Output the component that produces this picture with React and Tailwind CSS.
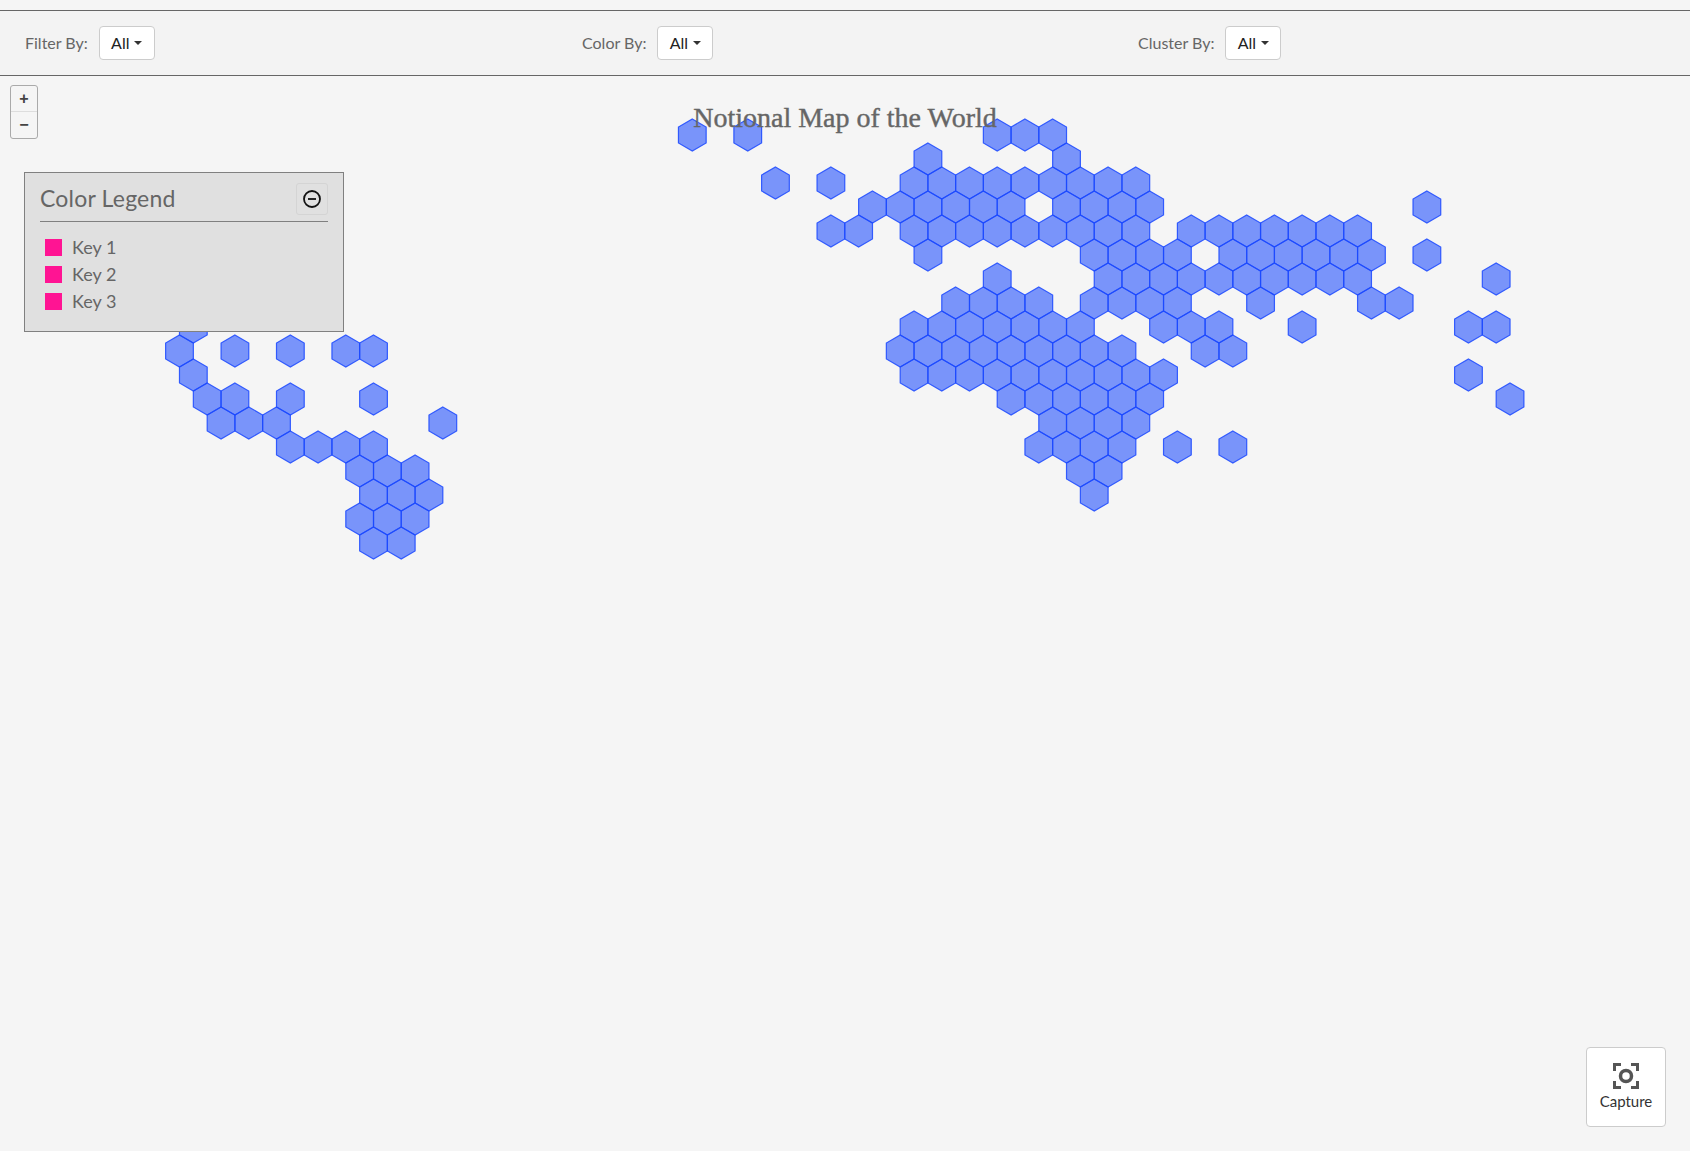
import React from 'react';

// hex bins: [row, columns...] on a pointy-top grid
const HEX_ROWS = [
  [0, 0, 4, 22, 24, 26],
  [1, 17, 27],
  [2, 6, 10, 16, 18, 20, 22, 24, 26, 28, 30, 32],
  [3, 13, 15, 17, 19, 21, 23, 27, 29, 31, 33, 53],
  [4, 10, 12, 16, 18, 20, 22, 24, 26, 28, 30, 32, 36, 38, 40, 42, 44, 46, 48],
  [5, 17, 29, 31, 33, 35, 39, 41, 43, 45, 47, 49, 53],
  [6, 22, 30, 32, 34, 36, 38, 40, 42, 44, 46, 48, 58],
  [7, 19, 21, 23, 25, 29, 31, 33, 35, 41, 49, 51],
  [8, -36, 16, 18, 20, 22, 24, 26, 28, 34, 36, 38, 44, 56, 58],
  [9, -37, -33, -29, -25, -23, 15, 17, 19, 21, 23, 25, 27, 29, 31, 37, 39],
  [10, -36, 16, 18, 20, 22, 24, 26, 28, 30, 32, 34, 56],
  [11, -35, -33, -29, -23, 23, 25, 27, 29, 31, 33, 59],
  [12, -34, -32, -30, -18, 26, 28, 30, 32],
  [13, -29, -27, -25, -23, 25, 27, 29, 31, 35, 39],
  [14, -24, -22, -20, 28, 30],
  [15, -23, -21, -19, 29],
  [16, -24, -22, -20],
  [17, -23, -21],
];

const HEX_PATH = 'M0,-16L13.86,-8L13.86,8L0,16L-13.86,8L-13.86,-8Z';

const hexes = HEX_ROWS.flatMap(([row, ...cols]) =>
  cols.map((col) => ({ key: `${row}_${col}`, x: 692.3 + col * 13.86, y: 135 + row * 24 }))
);

const FilterSelect = ({ label }) => (
  <div className="flex items-center gap-[11px]">
    <span className="text-[16px] text-[#666]">{label}</span>
    <button className="flex items-center gap-[5px] h-[34px] w-[56px] justify-center bg-white border border-[#ccc] rounded text-[16px] text-[#222]">
      All
      <span className="w-0 h-0 border-x-[4px] border-x-transparent border-t-[4px] border-t-[#333]"></span>
    </button>
  </div>
);

const App = () => {
  return (
    <div className="h-[1151px] flex flex-col bg-[#f5f5f5] overflow-hidden font-['Lato',sans-serif]">
      {/* Filters */}
      <div className="mt-[10px] h-[66px] shrink-0 pl-[25px] grid grid-cols-[557px_556px_1fr] items-center bg-[#f3f3f3] border-y border-[#666]">
        <FilterSelect label="Filter By:" />
        <FilterSelect label="Color By:" />
        <FilterSelect label="Cluster By:" />
      </div>

      {/* Map */}
      <div className="relative flex-1">
        <svg className="absolute inset-0" width="1690" height="1075" viewBox="0 76 1690 1075">
          {hexes.map((h) => (
            <path
              key={h.key}
              d={HEX_PATH}
              transform={`translate(${h.x},${h.y})`}
              fill="#2653fd"
              fillOpacity="0.6"
              stroke="#1a48ff"
              strokeOpacity="0.85"
              strokeWidth="1.2"
            />
          ))}
        </svg>

        <div className="absolute left-0 right-0 top-[25px] flex justify-center pointer-events-none">
          <h1 className="text-[28px] leading-[34px] text-[#666] [-webkit-text-stroke:0.4px_#666] font-['Liberation_Serif',serif]">Notional Map of the World</h1>
        </div>

        {/* Zoom */}
        <div className="absolute left-[10px] top-[9px] w-[28px] h-[54px] flex flex-col bg-[#f5f5f5] border border-[#aaa] rounded-[3px] text-[#444] font-bold">
          <div className="h-[26px] flex items-center justify-center border-b border-[#ddd] text-[16px] font-['Liberation_Sans',sans-serif]">+</div>
          <div className="flex-1 flex items-center justify-center text-[16px] font-['Liberation_Sans',sans-serif]">−</div>
        </div>

        {/* Color Legend */}
        <div className="absolute left-[24px] top-[96px] w-[320px] h-[160px] bg-[#e0e0e0] border border-[#808080] px-[15px]">
          <div className="h-[49px] pt-[3px] flex items-center justify-between border-b border-[#808080]">
            <span className="text-[23px] tracking-[0.2px] text-[#666]">Color Legend</span>
            <button className="w-[32px] h-[32px] flex items-center justify-center border border-[#d4d4d4] rounded-[3px]">
              <svg width="20" height="20" viewBox="0 0 20 20" fill="none" stroke="#111" strokeWidth="1.8">
                <circle cx="10" cy="10" r="8" />
                <path d="M6 10h8" />
              </svg>
            </button>
          </div>
          <div className="pt-[17px] flex flex-col gap-[10px] pl-[5px]">
            {['Key 1', 'Key 2', 'Key 3'].map((k) => (
              <div key={k} className="flex items-center gap-[10px] h-[17px]">
                <span className="w-[17px] h-[17px] bg-[#ff1493]"></span>
                <span className="text-[18px] text-[#666]">{k}</span>
              </div>
            ))}
          </div>
        </div>

        {/* Capture */}
        <button className="absolute right-[24px] bottom-[24px] w-[80px] h-[80px] flex flex-col items-center pt-[15px] bg-white border border-[#ccc] rounded">
          <svg width="26" height="26" viewBox="0 0 26 26" fill="none" stroke="#555">
            <path d="M1.5 8V1.5H8M18 1.5H24.5V8M24.5 18V24.5H18M8 24.5H1.5V18" strokeWidth="3" />
            <circle cx="13" cy="13" r="5.5" strokeWidth="3.5" />
          </svg>
          <span className="mt-[1px] text-[15px] leading-[22px] text-[#333]">Capture</span>
        </button>
      </div>
    </div>
  );
};

export default App;
